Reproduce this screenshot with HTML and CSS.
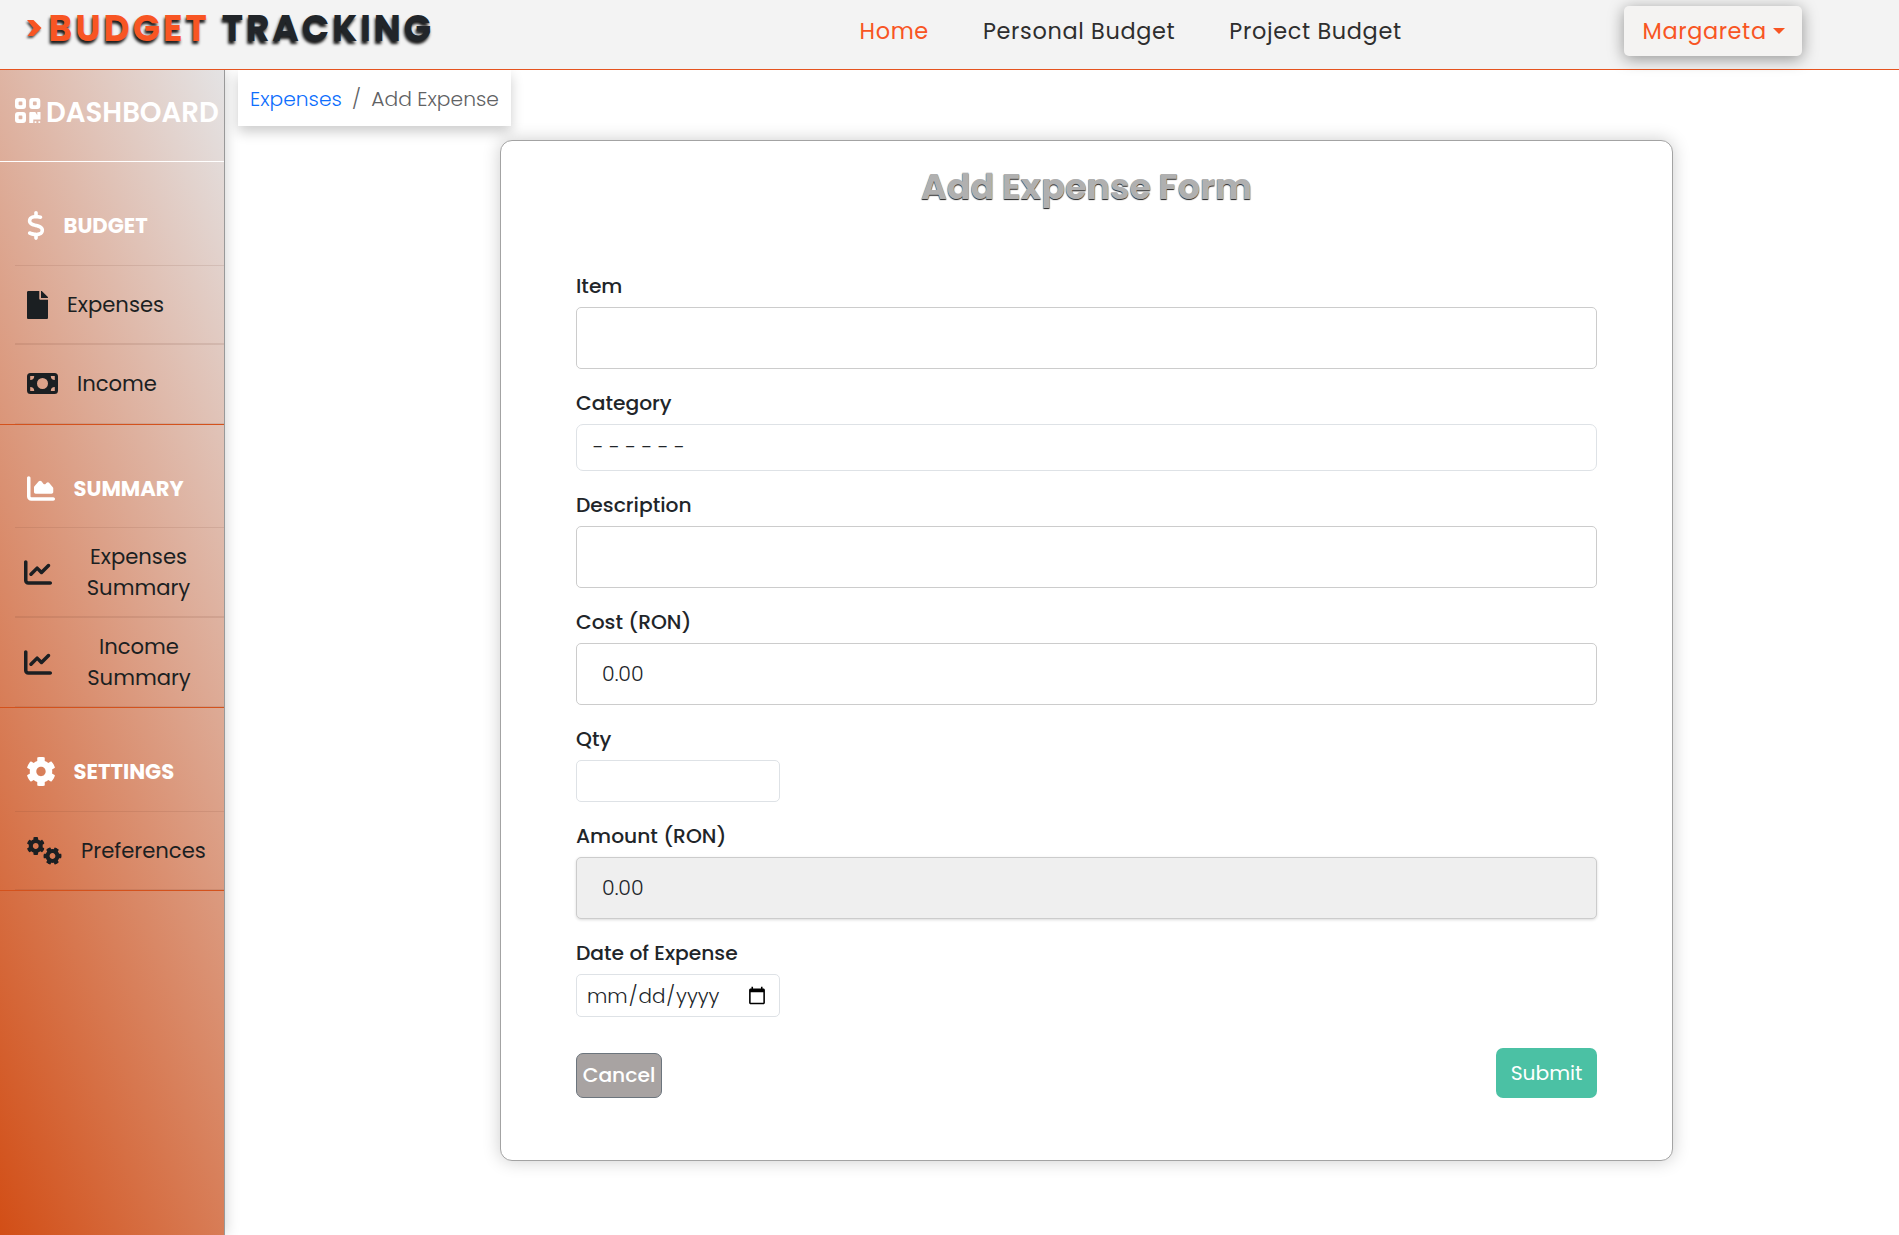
FILE: index.html
```html
<!DOCTYPE html>
<html lang="en">
<head>
<meta charset="utf-8">
<title>Budget Tracking</title>
<link rel="stylesheet" href="styles.css">
</head>
<body>
<svg width="0" height="0" class="defs" aria-hidden="true">
  <symbol id="cog" viewBox="18 8 476 496"><path d="M487.4 315.7l-42.6-24.6c4.3-23.2 4.3-47 0-70.2l42.6-24.6c4.9-2.8 7.1-8.6 5.5-14-11.1-35.6-30-67.8-54.7-94.6-3.8-4.1-10-5.1-14.8-2.3L380.8 110c-17.9-15.4-38.5-27.3-60.8-35.1V25.8c0-5.6-3.9-10.5-9.4-11.7-36.7-8.2-74.3-7.8-109.2 0-5.5 1.2-9.4 6.1-9.4 11.7V75c-22.2 7.9-42.8 19.8-60.8 35.1L88.7 85.5c-4.9-2.8-11-1.9-14.8 2.3-24.7 26.7-43.6 58.9-54.7 94.6-1.7 5.4.6 11.2 5.5 14L67.3 221c-4.3 23.2-4.3 47 0 70.2l-42.6 24.6c-4.9 2.8-7.1 8.6-5.5 14 11.1 35.6 30 67.8 54.7 94.6 3.8 4.1 10 5.1 14.8 2.3l42.6-24.6c17.9 15.4 38.5 27.3 60.8 35.1v49.2c0 5.6 3.9 10.5 9.4 11.7 36.7 8.2 74.3 7.8 109.2 0 5.5-1.2 9.4-6.1 9.4-11.7v-49.2c22.2-7.9 42.8-19.8 60.8-35.1l42.6 24.6c4.9 2.8 11 1.9 14.8-2.3 24.7-26.7 43.6-58.9 54.7-94.6 1.5-5.5-.7-11.3-5.6-14.1zM256 336c-44.1 0-80-35.9-80-80s35.9-80 80-80 80 35.9 80 80-35.9 80-80 80z"/></symbol>
  <symbol id="chart-line" viewBox="0 32 512 448"><path d="M64 64c0-17.7-14.3-32-32-32S0 46.3 0 64V400c0 44.2 35.8 80 80 80H480c17.7 0 32-14.3 32-32s-14.3-32-32-32H80c-8.8 0-16-7.2-16-16V64zm406.6 86.6c12.5-12.5 12.5-32.8 0-45.3s-32.8-12.5-45.3 0L320 210.7l-57.4-57.4c-12.5-12.5-32.8-12.5-45.3 0l-112 112c-12.5 12.5-12.5 32.8 0 45.3s32.8 12.5 45.3 0L240 221.3l57.4 57.4c12.5 12.5 32.8 12.5 45.3 0l128-128z"/></symbol>
</svg>

<header class="topbar">
  <a class="logo">
    <svg class="logo-mark" width="15" height="18" viewBox="0 0 15 18"><path d="M0 1H6.5L14.5 9L6.5 17H0.5L6.5 9Z"/></svg>
    <span class="logo-budget">BUDGET</span>
    <span class="logo-tracking">TRACKING</span>
  </a>
  <nav class="nav">
    <a class="nav-home">Home</a>
    <a>Personal Budget</a>
    <a>Project Budget</a>
  </nav>
  <button class="user">Margareta<span class="caret"></span></button>
</header>

<div class="layout">
  <aside class="sidebar">
    <div class="dash">
      <svg width="26" height="25" viewBox="0 0 26 25"><path fill-rule="evenodd" d="M3 0H8Q11 0 11 3V8Q11 11 8 11H3Q0 11 0 8V3Q0 0 3 0ZM4.4 3.6Q3.6 3.6 3.6 4.4V6.4Q3.6 7.2 4.4 7.2H6.6Q7.4 7.2 7.4 6.4V4.4Q7.4 3.6 6.6 3.6ZM17.3 0H22.3Q25.3 0 25.3 3V8Q25.3 11 22.3 11H17.3Q14.3 11 14.3 8V3Q14.3 0 17.3 0ZM18.7 3.6Q17.9 3.6 17.9 4.4V6.4Q17.9 7.2 18.7 7.2H20.9Q21.7 7.2 21.7 6.4V4.4Q21.7 3.6 20.9 3.6ZM3 14H8Q11 14 11 17V22Q11 25 8 25H3Q0 25 0 22V17Q0 14 3 14ZM4.4 17.6Q3.6 17.6 3.6 18.4V20.4Q3.6 21.2 4.4 21.2H6.6Q7.4 21.2 7.4 20.4V18.4Q7.4 17.6 6.6 17.6ZM14.3 15Q14.3 14 15.3 14H20.3L22.3 17.2V14H25.5V21.6H18.3V25H14.3ZM19.6 23.3H21.4V25H19.6ZM23.4 23.3H25.2V25H23.4Z"/></svg>
      <span>DASHBOARD</span>
    </div>

    <section class="group">
      <h2 class="group-head">
        <svg width="18" height="29" viewBox="0 0 320 512"><path d="M160 0c17.7 0 32 14.3 32 32V67.7c1.6 .2 3.1 .4 4.7 .7c.4 .1 .7 .1 1.1 .2l48 8.8c17.4 3.2 28.9 19.9 25.7 37.2s-19.9 28.9-37.2 25.7l-47.5-8.7c-31.3-4.6-58.9-1.5-78.3 6.2s-27.2 18.3-29 28.1c-2 10.7-.5 16.7 1.2 20.4c1.8 3.9 5.5 8.3 12.8 13.2c16.3 10.7 41.3 17.7 73.7 26.3l2.9 .8c28.6 7.6 63.6 16.8 89.6 33.8c14.2 9.3 27.6 21.9 35.9 39.5c8.5 17.9 10.3 37.9 6.4 59.2c-6.9 38-33.1 63.4-65.6 76.7c-13.7 5.6-28.6 9.2-44.4 11V480c0 17.7-14.3 32-32 32s-32-14.3-32-32V445.1c-.4-.1-.9-.1-1.3-.2l-.2 0c-24.4-3.8-64.5-14.3-91.5-26.3c-16.1-7.2-23.4-26.1-16.2-42.2s26.1-23.4 42.2-16.2c20.9 9.3 55.3 18.5 75.2 21.6c31.9 4.7 58.2 2 76-5.3c16.9-6.9 24.6-16.9 26.8-28.9c1.9-10.6 .4-16.7-1.3-20.4c-1.9-4-5.6-8.4-13-13.3c-16.4-10.7-41.5-17.7-74-26.3l-2.8-.7C119.4 279.3 84.4 270 58.4 253c-14.2-9.3-27.5-22-35.8-39.6c-8.4-17.9-10.1-37.9-6.1-59.2C23.7 116 52.3 91.2 84.8 78.3c13.3-5.3 27.9-8.9 43.2-11V32c0-17.7 14.3-32 32-32z"/></svg>
        <span>BUDGET</span>
      </h2>
      <a class="item">
        <svg width="21" height="28" viewBox="0 0 384 512"><path d="M224 136V0H24C10.7 0 0 10.7 0 24v464c0 13.3 10.7 24 24 24h336c13.3 0 24-10.7 24-24V160H248c-13.2 0-24-10.8-24-24zm160-14.1v6.1H256V0h6.1c6.4 0 12.5 2.5 17 7l97.9 98c4.5 4.5 7 10.6 7 16.9z"/></svg>
        <span>Expenses</span>
      </a>
      <a class="item item-income">
        <svg width="31" height="21" viewBox="0 0 31 21"><path fill-rule="evenodd" d="M3.5 0H27.5Q31 0 31 3.5V17.5Q31 21 27.5 21H3.5Q0 21 0 17.5V3.5Q0 0 3.5 0ZM15.5 5A5.5 5.5 0 1 0 15.5 16A5.5 5.5 0 1 0 15.5 5ZM3.2 3V7A4 4 0 0 0 7.2 3ZM27.8 3H23.8A4 4 0 0 0 27.8 7ZM3.2 18H7.2A4 4 0 0 0 3.2 14ZM27.8 18V14A4 4 0 0 0 23.8 18Z"/></svg>
        <span>Income</span>
      </a>
    </section>

    <section class="group">
      <h2 class="group-head group-summary">
        <svg width="28" height="25" viewBox="0 32 512 448"><path d="M64 64c0-17.7-14.3-32-32-32S0 46.3 0 64V400c0 44.2 35.8 80 80 80H480c17.7 0 32-14.3 32-32s-14.3-32-32-32H80c-8.8 0-16-7.2-16-16V64zm96 288H448c17.7 0 32-14.3 32-32V251.8c0-7.6-2.7-15-7.7-20.8l-65.8-76.8c-12.1-14.2-33.7-15-46.9-1.8l-21 21c-10 10-26.4 9.2-35.4-1.6l-39.2-47c-12.6-15.1-35.7-15.4-48.7-.6L135.9 215c-5.1 5.8-7.9 13.3-7.9 21.1v84c0 17.7 14.3 32 32 32z"/></svg>
        <span>SUMMARY</span>
      </h2>
      <a class="item item-tall">
        <svg width="28" height="25"><use href="#chart-line"/></svg>
        <span class="two-line">Expenses<br>Summary</span>
      </a>
      <a class="item item-tall item-tall-last">
        <svg width="28" height="25"><use href="#chart-line"/></svg>
        <span class="two-line">Income<br>Summary</span>
      </a>
    </section>

    <section class="group">
      <h2 class="group-head">
        <svg width="28" height="29"><use href="#cog"/></svg>
        <span>SETTINGS</span>
      </h2>
      <a class="item">
        <svg width="35" height="28" viewBox="0 0 35 28"><use href="#cog" width="17.5" height="18"/><g transform="rotate(30 25.5 19)"><use href="#cog" x="16.75" y="10" width="17.5" height="18"/></g></svg>
        <span>Preferences</span>
      </a>
    </section>
  </aside>

  <main class="main">
    <nav class="breadcrumb">
      <a class="crumb-link">Expenses</a>
      <span class="crumb-sep">/</span>
      <span>Add Expense</span>
    </nav>

    <form class="card">
      <h1 class="title">Add Expense Form</h1>
      <div class="fields">
        <div class="field"><label>Item</label><input class="control" type="text"></div>
        <div class="field"><label>Category</label><select class="control select"><option>- - - - - -</option></select></div>
        <div class="field"><label>Description</label><input class="control" type="text"></div>
        <div class="field"><label>Cost (RON)</label><input class="control" type="text" value="0.00"></div>
        <div class="field"><label>Qty</label><input class="control small qty" type="text"></div>
        <div class="field"><label>Amount (RON)</label><input class="control readonly" type="text" value="0.00" readonly></div>
        <div class="field"><label>Date of Expense</label><input class="control small date" type="date"></div>
      </div>
      <div class="actions">
        <button type="button" class="btn cancel">Cancel</button>
        <button type="button" class="btn submit">Submit</button>
      </div>
    </form>
  </main>
</div>
</body>
</html>
```
FILE: styles.css
```css
* { box-sizing: border-box; }

body {
  margin: 0;
  height: 1235px;
  display: flex;
  flex-direction: column;
  overflow: hidden;
  background: #fff;
  color: #212529;
  font-family: "Poppins", "Inter", sans-serif;
  font-size: 20.25px;
}

.defs { display: none; }
svg { flex: none; fill: currentColor; overflow: visible; }
h1, h2 { margin: 0; }
button, input, select { font: inherit; color: inherit; margin: 0; }

/* Top bar */
.topbar {
  position: relative;
  z-index: 2;
  flex: none;
  height: 70px;
  display: grid;
  grid-template-columns: 832.5px 1fr 178px;
  align-items: center;
  padding: 0 97px 7px 27px;
  background: #f3f3f3;
  border-bottom: 1px solid #e5531f;
}

.logo {
  display: flex;
  align-items: center;
  height: 56px;
  align-self: start;
  font-size: 36px;
  font-weight: 700;
  letter-spacing: 2.95px;
  text-shadow: -1px 3px 3px rgba(0, 0, 0, .9);
}
.logo-mark { color: #f85523; margin-right: 6.5px; filter: drop-shadow(-1px 2px 1px rgba(0, 0, 0, .7)); }
.logo-budget { color: #f85523; margin-right: 12px; }

.nav { display: flex; gap: 54px; font-size: 22.4px; letter-spacing: .66px; color: #2e2e2e; }
.nav-home { color: #f85523; }

.user {
  height: 50px;
  padding: 0 0 0 18.5px;
  display: flex;
  align-items: center;
  border: 0;
  border-radius: 5px;
  background: #f4f3f2;
  box-shadow: 0 3px 16px rgba(0, 0, 0, .4);
  color: #f85523;
  font-size: 22.4px;
  letter-spacing: .62px;
}
.caret {
  margin-left: 6px;
  border: 6px solid transparent;
  border-top-color: currentColor;
  border-bottom: 0;
}

.layout { flex: 1; display: flex; min-height: 0; }

/* Sidebar */
.sidebar {
  flex: none;
  width: 225px;
  border-right: 1px solid #999;
  background: linear-gradient(67deg, #d24e16, #e4e3e4);
  box-shadow: 0 0 14px rgba(0, 0, 0, .2);
}

.dash {
  height: 92px;
  display: flex;
  align-items: center;
  padding: 0 0 5px 15px;
  gap: 5px;
  border-bottom: 1px solid #fff;
  color: #fff;
  font-size: 27.6px;
  font-weight: 600;
}
.dash svg { margin-top: -6px; }

.group { border-bottom: 1px solid #d4521c; }

.group-head,
.item {
  display: flex;
  align-items: center;
  gap: 19px;
  margin-left: 15px;
  padding-left: 12px;
  border-bottom: 1px solid rgba(110, 60, 40, .12);
  font-size: 21.15px;
}
.group-head {
  height: 104px;
  padding-top: 24px;
  gap: 18.5px;
  color: #fff;
  font-weight: 700;
}
.group-summary { height: 103px; }

.item { height: 79px; color: #1b1f22; border-bottom-width: 2px; }
.item:last-child { border-bottom-width: 1px; }
.item-income { padding-bottom: 1px; }
.group:last-child .item { height: 78px; }

.item-tall { height: 90px; padding-left: 8.5px; gap: 34px; }
.item-tall-last { height: 89px; padding-left: 9px; }
.two-line { width: 106px; line-height: 31px; text-align: center; }

/* Content */
.main { flex: 1; display: flex; flex-direction: column; align-items: flex-start; }

.breadcrumb {
  width: 273px;
  height: 56px;
  margin-left: 13px;
  padding: 1px 0 0 12px;
  display: flex;
  align-items: center;
  background: #fff;
  box-shadow: 0 6px 12px rgba(0, 0, 0, .2);
  color: #5f6264;
  font-weight: 300;
}
.crumb-link { color: #0d6efd; }
.crumb-sep { margin: 0 10.25px; }

.card {
  width: 1173px;
  height: 1021px;
  margin: 14px 0 0 275px;
  padding: 23px 75px 0;
  border: 1px solid #a3a3a3;
  border-radius: 12px;
  background: #fff;
  box-shadow: 0 0 18px rgba(0, 0, 0, .2);
}

.title {
  margin-bottom: 63px;
  line-height: 46px;
  text-align: center;
  font-size: 35px;
  font-weight: 700;
  color: #b0b0b0;
  text-shadow: 0 1px 1px #222;
}

.fields { display: flex; flex-direction: column; gap: 21px; }
.field { display: flex; flex-direction: column; gap: 8px; }
.field label { line-height: 26px; font-weight: 500; }

.control {
  height: 62px;
  padding: 0 25px 1px;
  border: 1px solid #ccc;
  border-radius: 5px;
  background: #fff;
  font-size: 20.5px;
  font-weight: 300;
  outline: 0;
}
.select {
  height: 47px;
  padding: 0 16px 2px;
  appearance: none;
  border-color: #dee2e6;
  border-radius: 7px;
}
.small { width: 204px; border-color: #dee2e6; }
.qty { height: 42px; }
.readonly { background: #efefef; box-shadow: 0 1px 3px rgba(0, 0, 0, .15); }
.date { height: 43px; padding: 0 10px 0 9px; font-size: 19.9px; }

.actions { display: flex; justify-content: space-between; align-items: flex-end; margin-top: 31px; }
.btn { padding: 0; border-radius: 7px; color: #fff; }
.cancel {
  width: 86px;
  height: 45px;
  padding-bottom: 1px;
  background: #a8a3a2;
  border: 1px solid #6c757d;
  font-weight: 500;
}
.submit { width: 101px; height: 50px; border: 0; background: #4bc1a4; }
```
